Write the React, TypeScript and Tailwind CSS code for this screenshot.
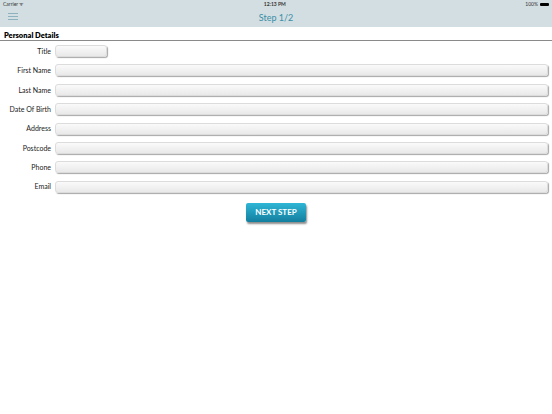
import React from 'react';

const fields = ['First Name', 'Last Name', 'Date Of Birth', 'Address', 'Postcode', 'Phone', 'Email'];

function Field({ label, short }: { label: string; short?: boolean }) {
  return (
    <div className="flex h-[12px] items-center">
      <label className="w-[52px] shrink-0 pr-[1px] text-right text-[7px] text-[#222]">{label}</label>
      <div
        className={`ml-[3px] h-[12px] rounded-[3px] border border-[#dcdcdc] bg-gradient-to-b from-[#fafafa] to-[#e9e9e9] shadow-[1px_1px_1px_rgba(0,0,0,0.35)] ${
          short ? 'w-[52px]' : 'mr-[4px] flex-1'
        }`}
      />
    </div>
  );
}

export default function App() {
  return (
    <div className="h-[414px] w-[552px] bg-white" style={{ fontFamily: 'Lato, "Open Sans", sans-serif' }}>
      <header className="h-[27px] bg-[#d3dee2]">
        <div className="flex h-[9px] items-center justify-between px-[3px] text-[5px] text-[#333]">
          <span>Carrier ᯤ</span>
          <span className="font-bold">12:13 PM</span>
          <span className="flex items-center gap-[2px]">
            100%
            <span className="inline-block h-[3px] w-[9px] rounded-[1px] bg-black" />
          </span>
        </div>
        <div className="relative flex h-[17px] items-center justify-center">
          <div className="absolute left-[8px] top-[4px] flex w-[10px] flex-col gap-[2px]">
            <span className="h-[1px] bg-[#8db2bf]" />
            <span className="h-[1px] bg-[#8db2bf]" />
            <span className="h-[1px] bg-[#8db2bf]" />
          </div>
          <span className="text-[9px] text-[#3a8ea6]">Step 1/2</span>
        </div>
      </header>

      <div className="mt-[4px] border-b border-[#8a8a8a] px-[4px] text-[7.5px] font-extrabold leading-[9px] text-black">
        Personal Details
      </div>

      <div className="mt-[4px] flex flex-col gap-[7.4px]">
        <Field label="Title" short />
        {fields.map((f) => (
          <Field key={f} label={f} />
        ))}
      </div>

      <div className="mt-[10px] flex justify-center">
        <button className="h-[19px] w-[60px] rounded-[2px] bg-gradient-to-b from-[#2fb6d6] to-[#137f9f] text-[8px] font-bold text-white shadow-[1px_2px_2px_rgba(0,0,0,0.45)]">
          NEXT STEP
        </button>
      </div>
    </div>
  );
}
